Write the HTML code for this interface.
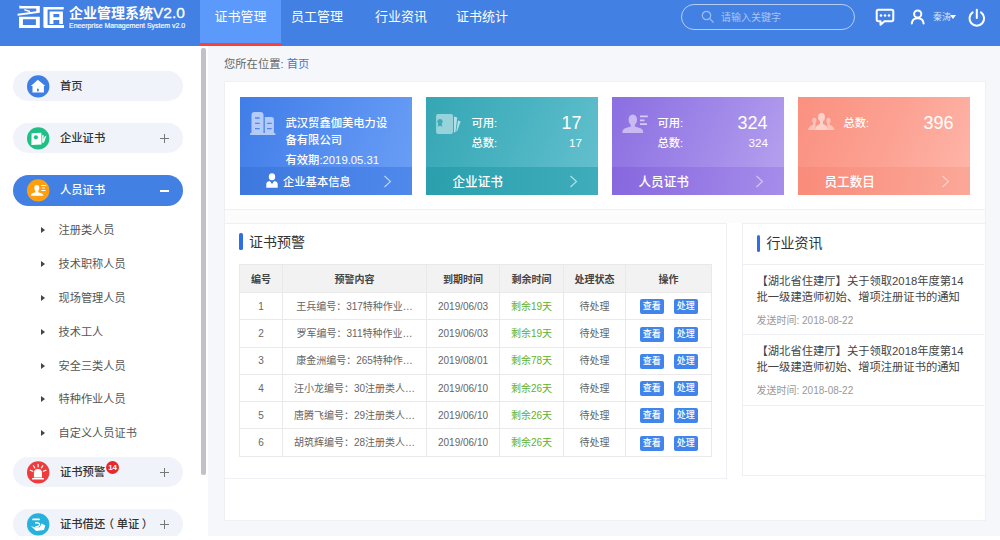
<!DOCTYPE html>
<html lang="zh-CN">
<head>
<meta charset="utf-8">
<title>企业管理系统V2.0</title>
<style>
*{box-sizing:border-box;margin:0;padding:0}
html,body{width:1000px;height:540px;overflow:hidden;background:#f5f7fa;font-family:"Liberation Sans","Noto Sans CJK SC",sans-serif;color:#333}
.abs{position:absolute}
#hdr{position:absolute;left:0;top:0;width:1000px;height:46px;background:#4280e3}
#hdr .tab{position:absolute;top:0;height:46px;width:80px;color:#fff;font-size:13px;line-height:34px;text-align:center}
#hdr .tab.on{background:#5b99fb;border-bottom:3px solid #fb3f3a;width:81px}
#logo-t{position:absolute;left:69px;top:2.500px;color:#fff;font-size:14px;line-height:20px;white-space:nowrap;font-weight:700}
#logo-t b{font-weight:normal;font-size:15.500px;-webkit-text-stroke:.3px #fff}
#logo-s{position:absolute;left:69px;top:21px;color:#fff;-webkit-text-stroke:.15px #fff;font-size:6.950px;line-height:10px;white-space:nowrap}
#search{position:absolute;left:681px;top:4px;width:174px;height:26px;border:1px solid #b5cef6;border-radius:13px}
#search span{position:absolute;left:39px;top:.6px;line-height:24px;font-size:10px;color:#a9c5f4;white-space:nowrap}
#uname{position:absolute;left:933px;top:10px;font-size:9px;line-height:14px;color:#d5e3fa;white-space:nowrap}
#side{position:absolute;left:0;top:46px;width:207.750px;height:490px;background:#fff;overflow:hidden}
#bot{position:absolute;left:0;top:535.750px;width:1000px;height:5px;background:#fff}
#sbar{position:absolute;left:201px;top:48px;width:4.500px;height:427px;background:#c1c1c9;border-radius:2px}
.mi{position:absolute;left:13px;width:170px;height:30px;border-radius:15px;background:#f0f3fa;font-size:11.300px;font-weight:500;line-height:30px;color:#333}
.mi .tx{position:absolute;left:47px;top:0;white-space:nowrap}
.mi .ic{position:absolute;left:14px;top:4px}
.mi .pm{position:absolute;left:147px;top:11px;width:9px;height:9px;font-size:0;color:transparent;overflow:hidden}
.mi .pm:before{content:"";position:absolute;left:0;top:4px;width:9px;height:1px;background:#777}
.mi .pm:after{content:"";position:absolute;left:4px;top:0;width:1px;height:9px;background:#777}
.mi.on .pm:before{background:#fff;height:2px;top:4px}
.mi.on .pm:after{display:none}
.mi.on{background:#4280e3;color:#fff;height:31px;border-radius:16px}
.mi.on .pm{color:#fff}
.sub{position:absolute;left:58.500px;font-size:11.200px;color:#555;line-height:16px;white-space:nowrap}
.sub:before{content:"";position:absolute;left:-18px;top:4.500px;border-left:4.500px solid #444;border-top:3.500px solid transparent;border-bottom:3.500px solid transparent}
#crumb{position:absolute;left:224px;top:55.700px;font-size:11.300px;line-height:16px;color:#666;white-space:nowrap}
#crumb b{font-weight:normal;color:#3a78dc}
#wrap{position:absolute;left:224px;top:81px;width:762px;height:440px;background:#fff;border:1px solid #eef0f3}
#band{position:absolute;left:225px;top:209px;width:760px;height:14px;background:#fcfcfd;border-top:1px solid #eef0f3}
.card{position:absolute;top:97px;width:172px;height:98px;color:#fff;overflow:hidden}
.card .ft{position:absolute;left:0;top:70px;width:172px;height:28px;background:rgba(0,0,0,.08)}
.card .ft span{position:absolute;top:.5px;line-height:28px;font-size:12.600px;font-weight:500;white-space:nowrap}
.card .lb{position:absolute;left:46px;font-size:11.300px;font-weight:500;line-height:16px;white-space:nowrap}
.card .big{position:absolute;right:16px;font-size:18px;line-height:22px;white-space:nowrap}
.card .sm{position:absolute;right:15.500px;font-size:11.700px;line-height:16px;white-space:nowrap}
.panel{position:absolute;background:#fff;border:1px solid #eff0f3}
.ptitle{position:absolute;font-size:14px;line-height:20px;color:#333;white-space:nowrap}
.pbar{position:absolute;width:3.300px;height:17px;background:#2e6fe6;border-radius:1.600px}
table{position:absolute;left:239px;top:264px;width:472px;border-collapse:collapse;table-layout:fixed;font-size:10px;color:#666}
td,th{border:1px solid #e9e9e9;text-align:center;height:27.300px;line-height:14px;padding:1.500px 0 0 0;white-space:nowrap;overflow:hidden;font-weight:normal}
th{background:#f2f2f2;height:28px;padding-top:2.500px;font-weight:bold;color:#444;font-size:10px}
td.g{color:#5fb12d}
.btn{display:inline-block;width:24px;height:15px;line-height:14.500px;background:#4084ec;color:#fff;font-size:9px;font-weight:500;border-radius:2px;margin:-.5px 4.850px 0 5.150px;vertical-align:middle}
.news{position:absolute;left:756.500px;font-size:11.300px;line-height:16.300px;color:#444;white-space:nowrap}
.ntime{position:absolute;left:756.500px;font-size:10px;line-height:14px;color:#999;white-space:nowrap}
.hr{position:absolute;left:743px;width:241px;height:1px;background:#eceef1}
</style>
</head>
<body>
<div id="hdr">
  <svg class="abs" style="left:14px;top:2px" width="54" height="30" viewBox="0 0 54 30" fill="#fff">
    <path d="M5.300 3.600L7 3.900H25.800V10.800L3.600 13.800V11.700L22.200 9.200V6.400H5.300Z"/>
    <path d="M10.300 6.900L16.100 8.800V10.300L10.300 8.400Z"/>
    <path fill-rule="evenodd" d="M5 14.700H25.800V26.100H5ZM8.900 17.200V23.100H21.900V17.200Z"/>
    <path d="M29.400 5H49.700V7.500H33.600V23.100H50V26.100H31Q29.400 26.100 29.400 24.500Z"/>
    <path fill-rule="evenodd" d="M35.600 9.400H48.900V21.900H45.300V18H39.400V21.900H35.600ZM39.400 11.900V15.300H45.300V11.900Z"/>
  </svg>
  <div id="logo-t">企业管理系统<b>V2.0</b></div>
  <div id="logo-s">Eneerprise Management System v2.0</div>
  <div class="tab on" style="left:200px">证书管理</div>
  <div class="tab" style="left:277px">员工管理</div>
  <div class="tab" style="left:361px">行业资讯</div>
  <div class="tab" style="left:442px">证书统计</div>
  <div id="search"><span>请输入关键字</span>
    <svg class="abs" style="left:19px;top:5px" width="14" height="14" viewBox="0 0 14 14" fill="none" stroke="#9dbdf2" stroke-width="1.2"><circle cx="5.5" cy="5.5" r="4.2"/><path d="M8.7 8.7L12.5 12.5"/></svg>
  </div>
  <svg class="abs" style="left:875px;top:8px" width="20" height="19" viewBox="0 0 20 19" fill="none" stroke="#fff" stroke-width="2"><path d="M3.500 1.700H16.500Q18.300 1.700 18.300 3.500V11.500Q18.300 13.300 16.500 13.300H9.500L5.500 16.800V13.300H3.500Q1.700 13.300 1.700 11.500V3.500Q1.700 1.700 3.500 1.700Z" stroke-linejoin="round"/><circle cx="6" cy="7.500" r="1.300" fill="#fff" stroke="none"/><circle cx="10" cy="7.500" r="1.300" fill="#fff" stroke="none"/><circle cx="14" cy="7.500" r="1.300" fill="#fff" stroke="none"/></svg>
  <svg class="abs" style="left:909px;top:8px" width="18" height="18" viewBox="0 0 18 18" fill="none" stroke="#fff" stroke-width="2" stroke-linecap="round"><circle cx="8.700" cy="6" r="3.600"/><path d="M2.800 15.500C3.200 11.500 6 10.300 8.700 10.300S14.200 11.500 14.600 15.500"/></svg>
  <div id="uname">秦涛</div>
  <div class="abs" style="left:950px;top:15px;border-top:4px solid #fff;border-left:3px solid transparent;border-right:3px solid transparent"></div>
  <svg class="abs" style="left:967px;top:8px" width="20" height="20" viewBox="0 0 20 20" fill="none" stroke="#fff" stroke-width="2" stroke-linecap="round"><path d="M9.800 1.800V10"/><path d="M5.600 4.400A7.300 7.300 0 1 0 14 4.400"/></svg>
</div>

<div id="side">
  <div class="mi" style="top:25px">
    <svg class="ic" width="23" height="23" viewBox="0 0 23 23"><circle cx="11.200" cy="11.400" r="11.200" fill="#3e7fe6"/><path fill="#fff" d="M10.800 4.800L3.900 10.900H5.500V17.600H16.900V10.900H18.300Z"/><rect x="10" y="13.600" width="1.800" height="2.800" rx=".9" fill="#3e7fe6"/></svg>
    <span class="tx">首页</span></div>
  <div class="mi" style="top:77px">
    <svg class="ic" width="23" height="23" viewBox="0 0 23 23"><circle cx="11.200" cy="11.400" r="11.200" fill="#1fc085"/><path fill="#fff" d="M4.600 6.200L14.300 5.700L14.600 17.600L4.400 17.900Z"/><circle cx="8.900" cy="10.300" r="2.100" fill="#1fc085"/><path fill="#fff" d="M15.200 8.100L16.600 8.300L16.600 12.500L18 8.800L19.300 9.300L16.900 15.700H15.200Z"/></svg>
    <span class="tx">企业证书</span><span class="pm">+</span></div>
  <div class="mi on" style="top:129px">
    <svg class="ic" width="23" height="23" viewBox="0 0 23 23"><circle cx="11.200" cy="11.400" r="11.200" fill="#ff9f10"/><ellipse cx="9.800" cy="8.900" rx="2.500" ry="2.900" fill="#fff"/><path fill="#fff" d="M3.800 16.800Q3.800 14.600 6 14L8.400 13.200V11H11.200V13.200L13.600 14Q16.400 14.600 16.400 16.800Z"/><path d="M14.300 6.500H19.300M14.800 9H17.900M14.300 11.500H18.400" stroke="#fff" stroke-width="1.100" fill="none"/></svg>
    <span class="tx">人员证书</span><span class="pm">−</span></div>
  <div class="sub" style="top:176px">注册类人员</div>
  <div class="sub" style="top:210px">技术职称人员</div>
  <div class="sub" style="top:244px">现场管理人员</div>
  <div class="sub" style="top:278px">技术工人</div>
  <div class="sub" style="top:312px">安全三类人员</div>
  <div class="sub" style="top:345px">特种作业人员</div>
  <div class="sub" style="top:379px">自定义人员证书</div>
  <div class="mi" style="top:411px">
    <svg class="ic" width="23" height="23" viewBox="0 0 23 23"><circle cx="11.200" cy="11.400" r="11.200" fill="#ef3b3b"/><path fill="#fff" d="M6.900 16.400V12A4.050 4.050 0 0 1 15 12V16.400Z"/><rect x="5" y="17" width="11.900" height="1.600" rx=".4" fill="#fff"/><path d="M11.100 3.300V5.800M6.400 4.700L7.800 6.900M15.800 4.700L14.400 6.900M3.300 9.200L5.800 10.300M18.900 9.200L16.400 10.300" stroke="#fff" stroke-width="1.200" stroke-linecap="round" fill="none"/></svg>
    <span class="tx">证书预警</span>
    <span class="abs" style="left:93px;top:3.800px;width:13px;height:13px;border-radius:7px;background:#e8272b;color:#fff;font-size:8px;font-weight:bold;line-height:13px;text-align:center;letter-spacing:-.3px">14</span>
    <span class="pm">+</span></div>
  <div class="mi" style="top:463px">
    <svg class="ic" width="23" height="23" viewBox="0 0 23 23"><circle cx="11.200" cy="11.400" r="11.200" fill="#27b1dd"/><rect x="5.300" y="5.600" width="7.500" height="1.700" rx=".5" fill="#fff"/><path fill="#fff" d="M3.900 13L9.200 18L17 17L18.300 12.500L14.700 10.500L12.800 14.300L7.500 14.300Z"/><path d="M8 9.800Q13 9.500 12.600 12Q11.500 14 8.500 13.500" stroke="#fff" stroke-width="1.300" fill="none"/></svg>
    <span class="tx">证书借还<span style="margin-left:-2.500px;margin-right:2.700px">（</span>单证<span style="margin-left:2.500px">）</span></span><span class="pm">+</span></div>
</div>
<div id="sbar"></div>
<div id="bot"></div>

<div id="crumb">您所在位置: <b>首页</b></div>
<div id="wrap"></div>
<div id="band"></div>

<!-- cards -->
<div class="card" style="left:239.500px;background:linear-gradient(110deg,#407de7 0%,#568ef0 50%,#6b9ff6 100%)">
  <svg class="abs" style="left:10px;top:14px" width="26" height="25" viewBox="0 0 26 25"><path fill="#b4cbf7" d="M1.500 22.500V4Q1.500 1 4.500 1H10.500Q13.500 1 13.500 4V22.500ZM14.800 22.500V6H21.400Q23.900 6 23.900 8.500V22.500ZM.500 22H25Q25.500 22 25.500 23T25 24H.500Q0 24 0 23T.500 22Z"/><path stroke="#4f88ea" stroke-width="1.300" fill="none" d="M5 7H9.700M5 12.300H9.700M5 17.600H9.700M17 12.300H21.700M17 17.600H21.700"/></svg>
  <div class="lb" style="top:18.400px;line-height:16.500px;width:110px;white-space:normal">武汉贸鑫伽美电力设备有限公司</div>
  <div class="lb" style="top:54.500px">有效期:2019.05.31</div>
  <div class="ft" style="background:linear-gradient(100deg,#3d78de,#4f89ec)"><svg class="abs" style="left:26px;top:5.500px" width="12" height="15" viewBox="0 0 12 15" fill="#fff"><ellipse cx="6" cy="3.700" rx="3.200" ry="3.500"/><path d="M.3 14.800V11Q.3 8.500 3.800 8L6 11L8.200 8Q11.700 8.500 11.700 11V14.800Z"/></svg>
    <span style="left:43.500px;font-size:11.300px">企业基本信息</span>
    <svg class="abs" style="left:143px;top:8px" width="9" height="13" viewBox="0 0 9 13" fill="none" stroke="#c0d5f8" stroke-width="1.100"><path d="M1.500 1L7.500 6.500L1.500 12"/></svg></div>
</div>
<div class="card" style="left:425.500px;background:linear-gradient(115deg,#35a6b4 0%,#4ab3c1 50%,#66c1cf 100%)">
  <svg class="abs" style="left:10px;top:16px" width="26" height="22" viewBox="0 0 26 22"><rect x=".1" y="1.100" width="16.900" height="19.800" rx="1.800" fill="#97d3da"/><path fill="#b5e0e5" d="M18 3.400L21.200 4.400L19.500 19L18 19.500ZM22 7.500L24.600 8.500L21 18.500L20.300 18Z"/><circle cx="4" cy="8.600" r="2.600" fill="#3fabb8"/><path fill="#3fabb8" d="M2.200 10.500L1.700 13.800L4 12.800L6.300 13.800L5.800 10.500Z"/></svg>
  <div class="lb" style="top:18px">可用:</div><div class="big" style="top:15px">17</div>
  <div class="lb" style="top:38px">总数:</div><div class="sm" style="top:37.500px">17</div>
  <div class="ft" style="background:linear-gradient(100deg,#2b9fad,#3fadbb)"><span style="left:27px">企业证书</span>
    <svg class="abs" style="left:143px;top:8px" width="9" height="13" viewBox="0 0 9 13" fill="none" stroke="#b5e0e6" stroke-width="1.100"><path d="M1.500 1L7.500 6.500L1.500 12"/></svg></div>
</div>
<div class="card" style="left:611.500px;background:linear-gradient(115deg,#8b6ee1 0%,#9f87e8 50%,#b7a3ef 100%)">
  <svg class="abs" style="left:10px;top:16px" width="27" height="21" viewBox="0 0 27 21"><path fill="#c9bbf2" d="M10.800 1.400C13.500 1.400 15 3.500 15 6.600C15 9 14 11 12.800 12V13.400L18.500 15.300Q21.200 16.300 21.200 19.500Q21.200 20 20.700 20H.900Q.400 20 .400 19.500Q.400 16.300 3.100 15.300L8.800 13.400V12C7.600 11 6.600 9 6.600 6.600C6.600 3.500 8.100 1.400 10.800 1.400Z"/><path d="M18 3.400H25.800M18 7.300H22.500M18 11.200H25" stroke="#d6cbf6" stroke-width="1.700" fill="none"/></svg>
  <div class="lb" style="top:18px">可用:</div><div class="big" style="top:15px">324</div>
  <div class="lb" style="top:38px">总数:</div><div class="sm" style="top:37.500px">324</div>
  <div class="ft" style="background:linear-gradient(100deg,#8767de,#a68deb)"><span style="left:27px">人员证书</span>
    <svg class="abs" style="left:143px;top:8px" width="9" height="13" viewBox="0 0 9 13" fill="none" stroke="#d5caf5" stroke-width="1.100"><path d="M1.500 1L7.500 6.500L1.500 12"/></svg></div>
</div>
<div class="card" style="left:797.500px;background:linear-gradient(115deg,#fa9080 0%,#fca192 50%,#feb7aa 100%)">
  <svg class="abs" style="left:10px;top:16px" width="28" height="18" viewBox="0 0 28 18"><g fill="#fcc3b9"><ellipse cx="6.300" cy="7.500" rx="2.100" ry="2.800"/><path d="M0 17Q.5 13.500 3.500 12.500L5.200 11.500V9.500H7.500V17Z"/><ellipse cx="20.500" cy="7.500" rx="2.100" ry="2.800"/><path d="M26.500 17Q26 13.500 23 12.500L21.600 11.500V9.500H19.300V17Z"/></g><g fill="#fdd2ca"><ellipse cx="13.500" cy="4.200" rx="3.400" ry="4.100"/><path d="M7.300 17Q7.500 13 10 12L12 11V7.500H15V11L17 12Q19.500 13 19.700 17Z"/></g></svg>
  <div class="lb" style="top:18px">总数:</div><div class="big" style="top:15px">396</div>
  <div class="ft" style="background:linear-gradient(100deg,#f98b7a,#fba899)"><span style="left:27px">员工数目</span>
    <svg class="abs" style="left:143px;top:8px" width="9" height="13" viewBox="0 0 9 13" fill="none" stroke="#fdd3cc" stroke-width="1.100"><path d="M1.500 1L7.500 6.500L1.500 12"/></svg></div>
</div>

<!-- warning panel -->
<div class="panel" style="left:224px;top:223px;width:503px;height:256px"></div>
<div class="pbar" style="left:239.300px;top:233.300px"></div>
<div class="ptitle" style="left:249px;top:232px">证书预警</div>
<table>
<colgroup><col style="width:43px"><col style="width:144px"><col style="width:73px"><col style="width:64px"><col style="width:62px"><col style="width:86px"></colgroup>
<tr><th>编号</th><th>预警内容</th><th>到期时间</th><th>剩余时间</th><th>处理状态</th><th>操作</th></tr>
<tr><td>1</td><td>王兵编号：317特种作业…</td><td>2019/06/03</td><td class="g">剩余19天</td><td>待处理</td><td><span class="btn">查看</span><span class="btn">处理</span></td></tr>
<tr><td>2</td><td>罗军编号：311特种作业…</td><td>2019/06/03</td><td class="g">剩余19天</td><td>待处理</td><td><span class="btn">查看</span><span class="btn">处理</span></td></tr>
<tr><td>3</td><td>康金洲编号：265特种作…</td><td>2019/08/01</td><td class="g">剩余78天</td><td>待处理</td><td><span class="btn">查看</span><span class="btn">处理</span></td></tr>
<tr><td>4</td><td>汪小龙编号：30注册类人…</td><td>2019/06/10</td><td class="g">剩余26天</td><td>待处理</td><td><span class="btn">查看</span><span class="btn">处理</span></td></tr>
<tr><td>5</td><td>唐腾飞编号：29注册类人…</td><td>2019/06/10</td><td class="g">剩余26天</td><td>待处理</td><td><span class="btn">查看</span><span class="btn">处理</span></td></tr>
<tr><td>6</td><td>胡筑辉编号：28注册类人…</td><td>2019/06/10</td><td class="g">剩余26天</td><td>待处理</td><td><span class="btn">查看</span><span class="btn">处理</span></td></tr>
</table>

<!-- news panel -->
<div class="panel" style="left:742px;top:223px;width:244px;height:253px"></div>
<div class="pbar" style="left:756.500px;top:235px"></div>
<div class="ptitle" style="left:766.500px;top:233px">行业资讯</div>
<div class="hr" style="top:264px"></div>
<div class="news" style="top:273px">【湖北省住建厅】关于领取2018年度第14<br>批一级建造师初始、增项注册证书的通知</div>
<div class="ntime" style="top:313.500px">发送时间: 2018-08-22</div>
<div class="hr" style="top:334px"></div>
<div class="news" style="top:343px">【湖北省住建厅】关于领取2018年度第14<br>批一级建造师初始、增项注册证书的通知</div>
<div class="ntime" style="top:383.500px">发送时间: 2018-08-22</div>
<div class="hr" style="top:404.500px"></div>
</body>
</html>
